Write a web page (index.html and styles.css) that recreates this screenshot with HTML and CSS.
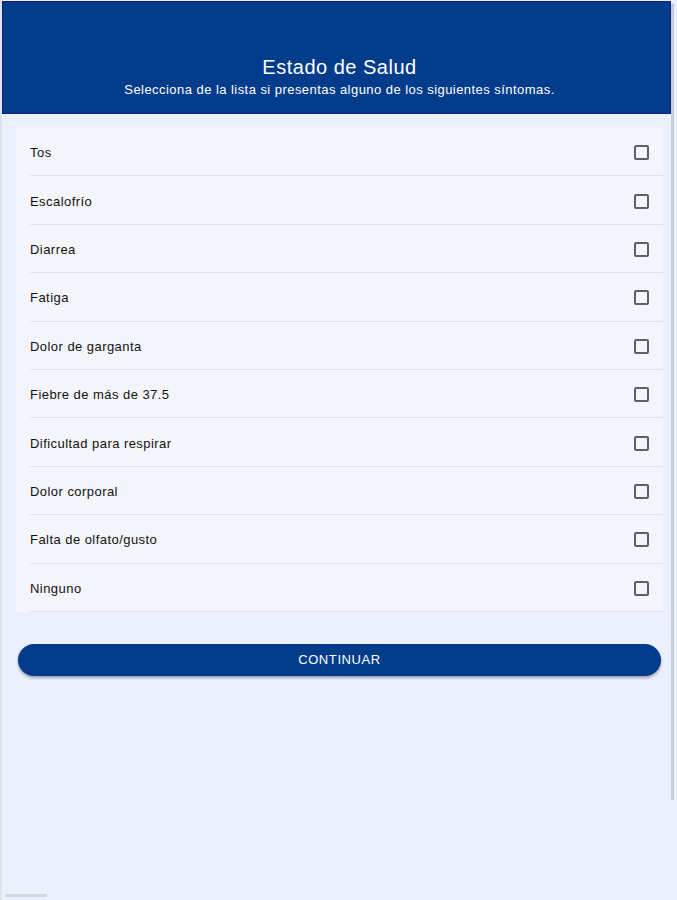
FILE: index.html
```html
<!DOCTYPE html>
<html lang="es">
<head>
<meta charset="utf-8">
<title>Estado de Salud</title>
<link rel="stylesheet" href="styles.css">
</head>
<body>
<div class="app">
  <header class="header">
    <h1 class="title">Estado de Salud</h1>
    <p class="subtitle">Selecciona de la lista si presentas alguno de los siguientes síntomas.</p>
  </header>
  <main class="content">
    <ul class="list">
      <li class="row"><span>Tos</span><span class="box"></span></li>
      <li class="row"><span>Escalofrío</span><span class="box"></span></li>
      <li class="row"><span>Diarrea</span><span class="box"></span></li>
      <li class="row"><span>Fatiga</span><span class="box"></span></li>
      <li class="row"><span>Dolor de garganta</span><span class="box"></span></li>
      <li class="row"><span>Fiebre de más de 37.5</span><span class="box"></span></li>
      <li class="row"><span>Dificultad para respirar</span><span class="box"></span></li>
      <li class="row"><span>Dolor corporal</span><span class="box"></span></li>
      <li class="row"><span>Falta de olfato/gusto</span><span class="box"></span></li>
      <li class="row"><span>Ninguno</span><span class="box"></span></li>
    </ul>
    <button class="btn">CONTINUAR</button>
  </main>
  <div class="vscroll"></div>
  <div class="hscroll"></div>
</div>
</body>
</html>
```
FILE: styles.css
```css
html, body {
  margin: 0;
  padding: 0;
  height: 100%;
}
body {
  background: #ebf0fd;
  font-family: "Liberation Sans", Arial, sans-serif;
  color: #1a1a1a;
}
.app {
  min-height: 900px;
  border-left: 2px solid #dfe3ec;
  box-sizing: border-box;
}
.header {
  margin: 1px 6px 0 0;
  height: 113px;
  box-sizing: border-box;
  border: 1px solid #101f80;
  background: #033c8a;
  color: #ffffff;
  display: flex;
  flex-direction: column;
  align-items: center;
  justify-content: flex-end;
  padding-bottom: 15px;
  padding-left: 6px;
}
.title {
  margin: 0;
  font-size: 20px;
  font-weight: normal;
  line-height: 24px;
  letter-spacing: 0.5px;
}
.subtitle {
  margin: 3px 0 0;
  font-size: 13px;
  line-height: 16px;
  letter-spacing: 0.45px;
}
.content {
  padding: 14px 14px 0 14px;
}
.list {
  list-style: none;
  margin: 0;
  padding: 0;
  background: #f4f5fa;
}
.row {
  height: 48.4px;
  box-sizing: border-box;
  margin-left: 14px;
  padding-right: 14px;
  border-bottom: 1px solid #e1e3e9;
  display: flex;
  align-items: center;
  justify-content: space-between;
  font-size: 13px;
  letter-spacing: 0.45px;
  color: #111111;
  padding-top: 2px;
}
.box {
  width: 11px;
  height: 11px;
  border: 2px solid #5f6066;
  border-radius: 2px;
}
.btn {
  display: block;
  width: calc(100% - 4px);
  margin: 32px 0 0 2px;
  height: 32px;
  border: none;
  border-radius: 16px;
  background: #033c8a;
  color: #ffffff;
  font-family: "Liberation Sans", Arial, sans-serif;
  font-size: 13px;
  letter-spacing: 0.6px;
  box-shadow: 0 2px 3px rgba(0, 0, 40, 0.35);
}
.vscroll {
  position: fixed;
  right: 3px;
  top: 3px;
  width: 3px;
  height: 797px;
  background: #c9ccd4;
  border-radius: 2px;
}
.hscroll {
  position: fixed;
  left: 5px;
  bottom: 3px;
  width: 42px;
  height: 3px;
  background: #d4d7de;
  border-radius: 2px;
}
```
